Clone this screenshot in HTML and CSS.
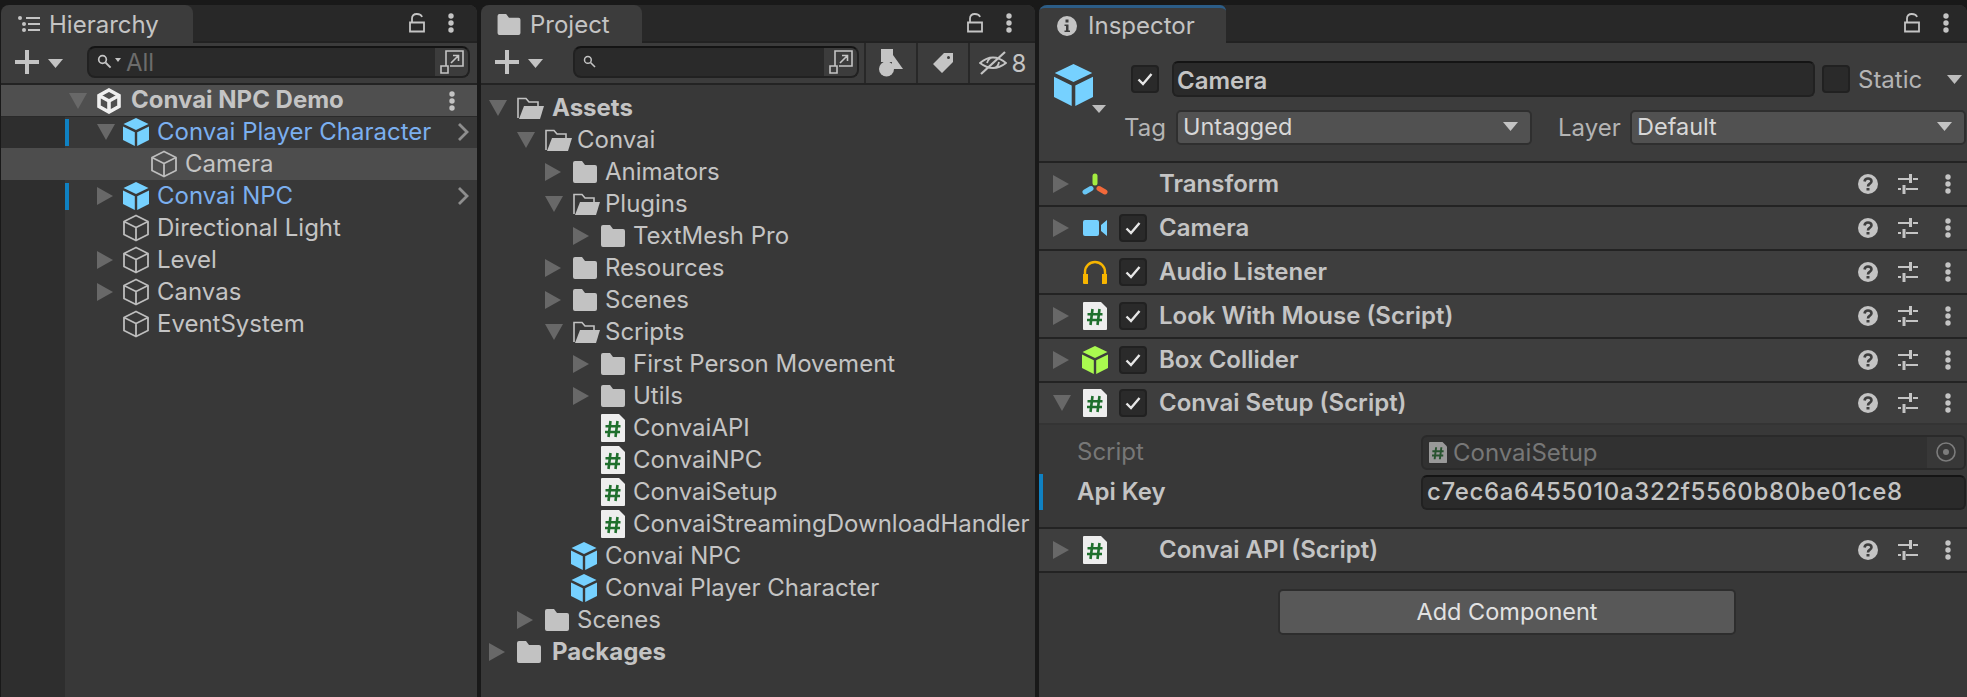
FILE: index.html
```html
<!DOCTYPE html>
<html lang="en">
<head>
    <meta charset="UTF-8">
    <title>Unity Editor</title>
    <link rel="stylesheet" href="styles.css">
</head>
<body>

<svg class="defs" aria-hidden="true">
    <symbol id="tri-r" viewBox="0 0 16 18" preserveAspectRatio="none"><path d="M0 0 16 9 0 18z"/></symbol>
    <symbol id="tri-d" viewBox="0 0 18 16" preserveAspectRatio="none"><path d="M0 0H18L9 16z"/></symbol>
    <symbol id="cube" viewBox="0 0 26 28"><path d="M13 0 25.500 6 13 12 .5 6zM0 8.500 11.800 14.300V28L0 22zM26 8.500 14.200 14.300V28L26 22z"/></symbol>
    <symbol id="cube-line" viewBox="0 0 26 28"><path fill="none" stroke="currentColor" stroke-width="1.800" stroke-linejoin="round" d="M13 1.500 25 7.500V20.500L13 26.500 1 20.500V7.500zM1 7.500 13 13.500 25 7.500M13 13.500V26.500"/></symbol>
    <symbol id="folder" viewBox="0 0 24 22"><path d="M0 2Q0 0 2 0H9L12 4H22Q24 4 24 6V20Q24 22 22 22H2Q0 22 0 20z"/></symbol>
    <symbol id="folder-open" viewBox="0 0 27 22"><path fill="none" stroke="currentColor" stroke-width="1.600" d="M1 21V1.500H9L12 5H21V9"/><path d="M7 9H27L23 22H2z"/></symbol>
    <symbol id="script" viewBox="0 0 24 28"><path fill="#eeeeee" d="M1 0H18L24 6V27Q24 28 23 28H1Q0 28 0 27V1Q0 0 1 0z"/><path fill="none" stroke="#1f6f2d" stroke-width="2.600" d="M9.500 7 7.500 23M16.500 7 14.500 23M4.500 12.200H19.500M4 18H19"/></symbol>
    <symbol id="lock" viewBox="0 0 16 20"><path fill="none" stroke="currentColor" stroke-width="1.800" d="M1 9.500H15V18.500H1zM3 9.500V5.500Q3 1 7.800 1 12 1 13 4"/></symbol>
    <symbol id="dots" viewBox="0 0 6 20"><circle cx="3" cy="3" r="2.700"/><circle cx="3" cy="10" r="2.700"/><circle cx="3" cy="17" r="2.700"/></symbol>
    <symbol id="plus" viewBox="0 0 24 24"><path d="M10 0H14V10H24V14H14V24H10V14H0V10H10z"/></symbol>
    <symbol id="search" viewBox="0 0 20 20"><circle cx="6.500" cy="6.500" r="4.500" fill="none" stroke="currentColor" stroke-width="2"/><path fill="none" stroke="currentColor" stroke-width="2.200" d="M10 10 16 16"/></symbol>
    <symbol id="popout" viewBox="0 0 24 24"><path fill="none" stroke="currentColor" stroke-width="1.600" d="M6 16V1H23V16H10M1 16H8V23H1zM11 13 18 6M13 5.500H18.500V11"/></symbol>
    <symbol id="list" viewBox="0 0 22 16"><circle cx="2" cy="2" r="2"/><circle cx="6" cy="8" r="2"/><circle cx="6" cy="14" r="2"/><path d="M8 1H22V3H8zM10 7H22V9H10zM10 13H22V15H10z"/></symbol>
    <symbol id="shapes" viewBox="0 0 24 28"><path d="M2 0H14V13H2z"/><circle cx="7.500" cy="20" r="7.500"/><path d="M14 6 24 20H12z"/></symbol>
    <symbol id="tag" viewBox="0 0 20 20"><path fill-rule="evenodd" d="M11 0H20V9L9 20 0 11zM15.500 3A1.500 1.500 0 1 0 15.500 6 1.500 1.500 0 0 0 15.500 3z"/></symbol>
    <symbol id="eye" viewBox="0 0 28 24"><path fill="none" stroke="currentColor" stroke-width="1.800" d="M1 12Q14 1 27 12 14 22 1 12zM8 12Q10 6 14 7M20 11Q19 17 14 17"/><path fill="none" stroke="currentColor" stroke-width="2.200" d="M2 23 26 1"/></symbol>
    <symbol id="info" viewBox="0 0 20 20"><path fill-rule="evenodd" d="M10 0A10 10 0 1 0 10 20 10 10 0 0 0 10 0zM8.500 3.500H11.500V6.500H8.500zM7.500 8.500H11.500V14.500H13V16H7.500V14.500H9V10H7.500z"/></symbol>
    <symbol id="help" viewBox="0 0 20 20"><circle cx="10" cy="10" r="10"/><path fill="none" stroke="#3e3e3e" stroke-width="2.600" d="M6.500 7.500Q7 4.500 10 4.500 13.500 4.500 13.500 7.300 13.500 9 11.500 10 10 10.800 10 12.500"/><path fill="#3e3e3e" d="M8.500 14H11.500V16.500H8.500z"/></symbol>
    <symbol id="sliders" viewBox="0 0 20 20"><path d="M0 4H11V6H0zM15 4H20V6H15zM11 0H14V9H11zM0 14H3V16H0zM8 14H20V16H8zM4.500 11H7.500V20H4.500z"/></symbol>
    <symbol id="transform" viewBox="0 0 26 22"><path fill="none" stroke="#a4ec40" stroke-width="5" stroke-linecap="round" d="M13 3V10"/><path fill="none" stroke="#69c6f5" stroke-width="5" stroke-linecap="round" d="M9 15.500 3 19"/><path fill="none" stroke="#f2693a" stroke-width="5" stroke-linecap="round" d="M17 15.500 23 19"/></symbol>
    <symbol id="camera" viewBox="0 0 24 16"><path d="M2 0H14Q16 0 16 2V14Q16 16 14 16H2Q0 16 0 14V2Q0 0 2 0zM18 5 24 0V16L18 11z"/></symbol>
    <symbol id="headphones" viewBox="0 0 24 24"><path fill="none" stroke="currentColor" stroke-width="2.400" d="M2 15V12A10 10 0 0 1 22 12V15"/><path d="M0 14H5V24H1Q0 24 0 23zM19 14H24V23Q24 24 23 24H19z"/></symbol>
    <symbol id="check" viewBox="0 0 16 14"><path fill="none" stroke="#e6e6e6" stroke-width="2.400" d="M1.500 7.500 6 12 14.500 2"/></symbol>
    <symbol id="target" viewBox="0 0 20 20"><circle cx="10" cy="10" r="9" fill="none" stroke="currentColor" stroke-width="1.600"/><circle cx="10" cy="10" r="3"/></symbol>
    <symbol id="chevron" viewBox="0 0 12 18"><path fill="none" stroke="currentColor" stroke-width="2.800" d="M2 1 10 9 2 17"/></symbol>
    <symbol id="unity" viewBox="0 0 24 26"><path fill="none" stroke="currentColor" stroke-width="3.600" d="M12 2 22 7.500V18.500L12 24 2 18.500V7.500zM12 13V24M12 13 2 7.500M12 13 22 7.500"/></symbol>
</svg>

<div class="editor">

    <section class="panel hierarchy">
        <div class="tabbar">
            <div class="tab"><svg class="i-list"><use href="#list"/></svg>Hierarchy</div>
            <div class="tab-tools"><svg class="i-lock"><use href="#lock"/></svg><svg class="i-dots"><use href="#dots"/></svg></div>
        </div>
        <div class="toolbar">
            <svg class="i-plus"><use href="#plus"/></svg>
            <svg class="i-drop"><use href="#tri-d"/></svg>
            <div class="search">
                <svg class="i-search"><use href="#search"/></svg><span class="search-drop"></span>
                <span class="search-text">All</span>
                <span class="popout"><svg class="i-popout"><use href="#popout"/></svg></span>
            </div>
        </div>
        <div class="tree">
            <div class="row scene">
                <svg class="tri-d"><use href="#tri-d"/></svg>
                <svg class="i-unity"><use href="#unity"/></svg>
                <span class="name bold">Convai NPC Demo</span>
                <svg class="i-dots scene-dots"><use href="#dots"/></svg>
            </div>
            <div class="row lv1 changed">
                <span class="arrow"><svg class="tri-d"><use href="#tri-d"/></svg></span>
                <svg class="i-cube"><use href="#cube"/></svg>
                <span class="name blue">Convai Player Character</span>
                <svg class="i-chevron"><use href="#chevron"/></svg>
            </div>
            <div class="row lv2 selected">
                <svg class="i-cube line"><use href="#cube-line"/></svg>
                <span class="name">Camera</span>
            </div>
            <div class="row lv1 changed">
                <span class="arrow"><svg class="tri-r"><use href="#tri-r"/></svg></span>
                <svg class="i-cube"><use href="#cube"/></svg>
                <span class="name blue">Convai NPC</span>
                <svg class="i-chevron"><use href="#chevron"/></svg>
            </div>
            <div class="row lv1">
                <span class="arrow"></span>
                <svg class="i-cube line"><use href="#cube-line"/></svg>
                <span class="name">Directional Light</span>
            </div>
            <div class="row lv1">
                <span class="arrow"><svg class="tri-r"><use href="#tri-r"/></svg></span>
                <svg class="i-cube line"><use href="#cube-line"/></svg>
                <span class="name">Level</span>
            </div>
            <div class="row lv1">
                <span class="arrow"><svg class="tri-r"><use href="#tri-r"/></svg></span>
                <svg class="i-cube line"><use href="#cube-line"/></svg>
                <span class="name">Canvas</span>
            </div>
            <div class="row lv1">
                <span class="arrow"></span>
                <svg class="i-cube line"><use href="#cube-line"/></svg>
                <span class="name">EventSystem</span>
            </div>
        </div>
    </section>

    <section class="panel project">
        <div class="tabbar">
            <div class="tab"><svg class="i-tabfolder"><use href="#folder"/></svg>Project</div>
            <div class="tab-tools"><svg class="i-lock"><use href="#lock"/></svg><svg class="i-dots"><use href="#dots"/></svg></div>
        </div>
        <div class="toolbar">
            <svg class="i-plus"><use href="#plus"/></svg>
            <svg class="i-drop"><use href="#tri-d"/></svg>
            <div class="search">
                <svg class="i-search small"><use href="#search"/></svg>
                <span class="search-text"></span>
                <span class="popout"><svg class="i-popout"><use href="#popout"/></svg></span>
            </div>
            <div class="tool-btns">
                <span class="tool-btn"><svg class="i-shapes"><use href="#shapes"/></svg></span>
                <span class="tool-btn"><svg class="i-tag"><use href="#tag"/></svg></span>
                <span class="tool-btn wide"><svg class="i-eye"><use href="#eye"/></svg>8</span>
            </div>
        </div>
        <div class="files">
            <div class="file lv0"><span class="arrow"><svg class="tri-d"><use href="#tri-d"/></svg></span><svg class="i-folder open"><use href="#folder-open"/></svg><span class="name bold root">Assets</span></div>
            <div class="file lv1"><span class="arrow"><svg class="tri-d"><use href="#tri-d"/></svg></span><svg class="i-folder open"><use href="#folder-open"/></svg><span class="name">Convai</span></div>
            <div class="file lv2"><span class="arrow"><svg class="tri-r"><use href="#tri-r"/></svg></span><svg class="i-folder"><use href="#folder"/></svg><span class="name">Animators</span></div>
            <div class="file lv2"><span class="arrow"><svg class="tri-d"><use href="#tri-d"/></svg></span><svg class="i-folder open"><use href="#folder-open"/></svg><span class="name">Plugins</span></div>
            <div class="file lv3"><span class="arrow"><svg class="tri-r"><use href="#tri-r"/></svg></span><svg class="i-folder"><use href="#folder"/></svg><span class="name">TextMesh Pro</span></div>
            <div class="file lv2"><span class="arrow"><svg class="tri-r"><use href="#tri-r"/></svg></span><svg class="i-folder"><use href="#folder"/></svg><span class="name">Resources</span></div>
            <div class="file lv2"><span class="arrow"><svg class="tri-r"><use href="#tri-r"/></svg></span><svg class="i-folder"><use href="#folder"/></svg><span class="name">Scenes</span></div>
            <div class="file lv2"><span class="arrow"><svg class="tri-d"><use href="#tri-d"/></svg></span><svg class="i-folder open"><use href="#folder-open"/></svg><span class="name">Scripts</span></div>
            <div class="file lv3"><span class="arrow"><svg class="tri-r"><use href="#tri-r"/></svg></span><svg class="i-folder"><use href="#folder"/></svg><span class="name">First Person Movement</span></div>
            <div class="file lv3"><span class="arrow"><svg class="tri-r"><use href="#tri-r"/></svg></span><svg class="i-folder"><use href="#folder"/></svg><span class="name">Utils</span></div>
            <div class="file lv3"><span class="arrow"></span><svg class="i-folder script"><use href="#script"/></svg><span class="name">ConvaiAPI</span></div>
            <div class="file lv3"><span class="arrow"></span><svg class="i-folder script"><use href="#script"/></svg><span class="name">ConvaiNPC</span></div>
            <div class="file lv3"><span class="arrow"></span><svg class="i-folder script"><use href="#script"/></svg><span class="name">ConvaiSetup</span></div>
            <div class="file lv3"><span class="arrow"></span><svg class="i-folder script"><use href="#script"/></svg><span class="name">ConvaiStreamingDownloadHandler</span></div>
            <div class="file lv2"><span class="arrow"></span><svg class="i-folder prefab"><use href="#cube"/></svg><span class="name">Convai NPC</span></div>
            <div class="file lv2"><span class="arrow"></span><svg class="i-folder prefab"><use href="#cube"/></svg><span class="name">Convai Player Character</span></div>
            <div class="file lv1"><span class="arrow"><svg class="tri-r"><use href="#tri-r"/></svg></span><svg class="i-folder"><use href="#folder"/></svg><span class="name">Scenes</span></div>
            <div class="file lv0"><span class="arrow"><svg class="tri-r"><use href="#tri-r"/></svg></span><svg class="i-folder"><use href="#folder"/></svg><span class="name bold root">Packages</span></div>
        </div>
    </section>

    <section class="panel inspector">
        <div class="tabbar">
            <div class="tab active"><svg class="i-info"><use href="#info"/></svg>Inspector</div>
            <div class="tab-tools"><svg class="i-lock"><use href="#lock"/></svg><svg class="i-dots"><use href="#dots"/></svg></div>
        </div>
        <div class="go-head">
            <div class="go-icon">
                <svg class="i-go"><use href="#cube"/></svg>
                <svg class="i-go-drop"><use href="#tri-d"/></svg>
            </div>
            <div class="go-fields">
                <div class="go-line">
                    <span class="check"><svg class="i-check"><use href="#check"/></svg></span>
                    <div class="name-field">Camera</div>
                    <span class="check"></span>
                    <span class="static-label">Static</span>
                    <svg class="i-drop"><use href="#tri-d"/></svg>
                </div>
                <div class="go-line second">
                    <span class="tag-label">Tag</span>
                    <div class="dropdown tag-drop">Untagged<svg class="i-drop"><use href="#tri-d"/></svg></div>
                    <span class="layer-label">Layer</span>
                    <div class="dropdown layer-drop">Default<svg class="i-drop"><use href="#tri-d"/></svg></div>
                </div>
            </div>
        </div>

        <div class="comp">
            <span class="arrow"><svg class="tri-r"><use href="#tri-r"/></svg></span>
            <span class="comp-icon"><svg class="i-transform"><use href="#transform"/></svg></span>
            <span class="no-check"></span>
            <span class="comp-title">Transform</span>
            <div class="comp-tools"><svg class="i-help"><use href="#help"/></svg><svg class="i-sliders"><use href="#sliders"/></svg><svg class="i-dots"><use href="#dots"/></svg></div>
        </div>
        <div class="comp">
            <span class="arrow"><svg class="tri-r"><use href="#tri-r"/></svg></span>
            <span class="comp-icon"><svg class="i-camera"><use href="#camera"/></svg></span>
            <span class="check"><svg class="i-check"><use href="#check"/></svg></span>
            <span class="comp-title">Camera</span>
            <div class="comp-tools"><svg class="i-help"><use href="#help"/></svg><svg class="i-sliders"><use href="#sliders"/></svg><svg class="i-dots"><use href="#dots"/></svg></div>
        </div>
        <div class="comp">
            <span class="arrow"></span>
            <span class="comp-icon"><svg class="i-phones"><use href="#headphones"/></svg></span>
            <span class="check"><svg class="i-check"><use href="#check"/></svg></span>
            <span class="comp-title">Audio Listener</span>
            <div class="comp-tools"><svg class="i-help"><use href="#help"/></svg><svg class="i-sliders"><use href="#sliders"/></svg><svg class="i-dots"><use href="#dots"/></svg></div>
        </div>
        <div class="comp">
            <span class="arrow"><svg class="tri-r"><use href="#tri-r"/></svg></span>
            <span class="comp-icon"><svg class="i-script"><use href="#script"/></svg></span>
            <span class="check"><svg class="i-check"><use href="#check"/></svg></span>
            <span class="comp-title">Look With Mouse (Script)</span>
            <div class="comp-tools"><svg class="i-help"><use href="#help"/></svg><svg class="i-sliders"><use href="#sliders"/></svg><svg class="i-dots"><use href="#dots"/></svg></div>
        </div>
        <div class="comp">
            <span class="arrow"><svg class="tri-r"><use href="#tri-r"/></svg></span>
            <span class="comp-icon"><svg class="i-box"><use href="#cube"/></svg></span>
            <span class="check"><svg class="i-check"><use href="#check"/></svg></span>
            <span class="comp-title">Box Collider</span>
            <div class="comp-tools"><svg class="i-help"><use href="#help"/></svg><svg class="i-sliders"><use href="#sliders"/></svg><svg class="i-dots"><use href="#dots"/></svg></div>
        </div>
        <div class="comp open">
            <span class="arrow"><svg class="tri-d"><use href="#tri-d"/></svg></span>
            <span class="comp-icon"><svg class="i-script"><use href="#script"/></svg></span>
            <span class="check"><svg class="i-check"><use href="#check"/></svg></span>
            <span class="comp-title">Convai Setup (Script)</span>
            <div class="comp-tools"><svg class="i-help"><use href="#help"/></svg><svg class="i-sliders"><use href="#sliders"/></svg><svg class="i-dots"><use href="#dots"/></svg></div>
        </div>
        <div class="comp-body">
            <div class="prop">
                <span class="prop-label dim">Script</span>
                <div class="field objfield">
                    <svg class="i-script small"><use href="#script"/></svg>
                    <span class="dim">ConvaiSetup</span>
                    <span class="picker"><svg class="i-target"><use href="#target"/></svg></span>
                </div>
            </div>
            <div class="prop changed">
                <span class="prop-label bold">Api Key</span>
                <div class="field keyfield">c7ec6a6455010a322f5560b80be01ce8</div>
            </div>
        </div>
        <div class="comp last">
            <span class="arrow"><svg class="tri-r"><use href="#tri-r"/></svg></span>
            <span class="comp-icon"><svg class="i-script"><use href="#script"/></svg></span>
            <span class="no-check"></span>
            <span class="comp-title">Convai API (Script)</span>
            <div class="comp-tools"><svg class="i-help"><use href="#help"/></svg><svg class="i-sliders"><use href="#sliders"/></svg><svg class="i-dots"><use href="#dots"/></svg></div>
        </div>
        <div class="add-wrap"><button type="button" class="add-btn">Add Component</button></div>
    </section>

</div>

</body>
</html>
```

FILE: styles.css
```css
* {
    box-sizing: border-box;
}
html, body {
    height: 100%;
}
body {
    margin: 0;
    background: #191919;
    overflow: hidden;
    font-family: "Inter", "Liberation Sans", sans-serif;
    font-size: 24px;
    color: #c4c4c4;
}
svg {
    display: block;
    flex: none;
    fill: currentColor;
}
.defs {
    display: none;
}

.editor {
    display: flex;
    gap: 4px;
    height: 100%;
    padding: 5px 0 0 1px;
}
.panel {
    display: flex;
    flex-direction: column;
    background: #383838;
    border-radius: 8px 8px 0 0;
    overflow: hidden;
}
.hierarchy {
    width: 476px;
}
.project {
    width: 554px;
}
.inspector {
    width: 928px;
}

/* tab strip */
.tabbar {
    display: flex;
    align-items: stretch;
    height: 38px;
    flex: none;
    background: #282828;
    box-shadow: inset 0 -2px 0 #222222;
}
.tab {
    display: flex;
    align-items: center;
    height: 38px;
    background: #3c3c3c;
    border-radius: 8px 8px 0 0;
}
.hierarchy .tab {
    width: 192px;
    padding-left: 17px;
}
.project .tab {
    width: 161px;
    padding-left: 16px;
}
.tab.active {
    width: 187px;
    padding-left: 18px;
    border-top: 3px solid #2c5d87;
    border-radius: 6px 6px 0 0;
}
.tab-tools {
    display: flex;
    align-items: center;
    margin-left: auto;
    padding-bottom: 2px;
    color: #c4c4c4;
}
.i-list {
    width: 22px;
    height: 16px;
    margin-right: 9px;
}
.i-tabfolder {
    width: 24px;
    height: 21px;
    margin-right: 9px;
}
.i-info {
    width: 20px;
    height: 20px;
    margin-right: 11px;
}
.i-lock {
    width: 16px;
    height: 20px;
}
.i-dots {
    width: 6px;
    height: 20px;
}
.tab-tools .i-dots {
    margin-left: 23px;
    margin-right: 23px;
}
.inspector .tab-tools .i-dots {
    margin-right: 18px;
}

/* toolbar */
.toolbar {
    display: flex;
    align-items: center;
    height: 42px;
    flex: none;
    background: #3c3c3c;
    border-bottom: 2px solid #232323;
    padding-left: 14px;
}
.i-plus {
    width: 24px;
    height: 24px;
}
.toolbar .i-plus {
    margin-bottom: 2px;
}
.i-drop {
    width: 15px;
    height: 9px;
}
.toolbar .i-drop {
    margin-left: 9px;
}
.search {
    display: flex;
    align-items: center;
    height: 32px;
    background: #2a2a2a;
    border: 2px solid #212121;
    border-top-color: #141414;
    border-radius: 8px;
    color: #c4c4c4;
    overflow: hidden;
}
.hierarchy .search {
    width: 383px;
    margin-left: 24px;
    margin-bottom: 2px;
}
.project .search {
    width: 286px;
    margin-left: 30px;
    margin-bottom: 2px;
}
.i-search {
    width: 17px;
    height: 17px;
    margin-left: 8px;
}
.i-search.small {
    width: 15px;
    height: 15px;
}
.search-drop {
    width: 0;
    height: 0;
    margin: 0 0 4px 1px;
    border: 3px solid transparent;
    border-top: 4px solid #c4c4c4;
    border-bottom: 0;
}
.search-text {
    margin-left: 5px;
    color: #6c6c6c;
}
.popout {
    display: flex;
    align-items: center;
    justify-content: center;
    align-self: stretch;
    width: 33px;
    margin-left: auto;
    background: #3c3c3c;
}
.i-popout {
    width: 24px;
    height: 24px;
}
.tool-btns {
    display: flex;
    align-self: stretch;
    margin-left: 5px;
    flex: 1;
}
.tool-btn {
    display: flex;
    align-items: center;
    justify-content: center;
    width: 52px;
    border-left: 2px solid #282828;
}
.tool-btn.wide {
    flex: 1;
    gap: 5px;
}
.i-shapes {
    width: 24px;
    height: 28px;
}
.i-tag {
    width: 20px;
    height: 20px;
}
.i-eye {
    width: 28px;
    height: 24px;
}

/* hierarchy tree */
.tree {
    flex: 1;
    background: linear-gradient(90deg, #2e2e2e 64px, #383838 64px);
}
.row {
    display: flex;
    align-items: center;
    height: 32px;
    position: relative;
}
.row .arrow {
    width: 26px;
}
.scene {
    height: 31px;
    padding-left: 68px;
    background: #4f4f4f;
    box-shadow: 0 1px 0 #2a2a2a;
}
.lv1 {
    padding-left: 96px;
}
.lv2 {
    padding-left: 150px;
}
.row.selected {
    background: #4d4d4d;
}
.changed::before {
    content: "";
    position: absolute;
    left: 64px;
    top: 3px;
    bottom: 2px;
    width: 4px;
    background: #0f81c2;
}
.tri-d {
    width: 18px;
    height: 16px;
    fill: #686868;
}
.tri-r {
    width: 16px;
    height: 18px;
    fill: #686868;
}
.scene .tri-d {
    margin-right: 10px;
}
.i-unity {
    width: 24px;
    height: 26px;
    margin-right: 10px;
    color: #efefef;
}
.i-cube {
    width: 26px;
    height: 28px;
    margin-right: 8px;
    fill: #76d1ff;
}
.i-cube.line {
    color: #bdbdbd;
}
.name {
    margin-bottom: 2px;
    white-space: nowrap;
}
.bold {
    font-weight: 700;
}
.blue {
    color: #7bafef;
}
.i-chevron {
    position: absolute;
    right: 8px;
    width: 12px;
    height: 18px;
    color: #8e8e8e;
}
.scene-dots {
    position: absolute;
    right: 22px;
    color: #c4c4c4;
}

/* project tree */
.files {
    flex: 1;
    padding-top: 7px;
}
.file {
    display: flex;
    align-items: center;
    height: 32px;
}
.file .arrow {
    width: 28px;
    display: flex;
    align-items: center;
}
.file.lv0 {
    padding-left: 8px;
}
.file.lv1 {
    padding-left: 36px;
}
.file.lv2 {
    padding-left: 64px;
}
.file.lv3 {
    padding-left: 92px;
}
.i-folder {
    width: 24px;
    height: 22px;
    margin-right: 8px;
    color: #c2c2c2;
}
.i-folder.open {
    width: 27px;
    margin-right: 5px;
}
.i-folder.script {
    height: 28px;
}
.i-folder.prefab {
    width: 26px;
    height: 28px;
    margin-left: -2px;
    fill: #76d1ff;
}
.name.root {
    margin-left: 3px;
}

/* inspector header */
.go-head {
    display: flex;
    flex: none;
    height: 120px;
    background: #3c3c3c;
    border-bottom: 2px solid #232323;
}
.go-icon {
    width: 85px;
    padding: 21px 0 0 15px;
}
.i-go {
    width: 39px;
    height: 42px;
    fill: #76d1ff;
}
.i-go-drop {
    width: 14px;
    height: 8px;
    margin: -1px 0 0 38px;
    fill: #bdbdbd;
}
.go-fields {
    flex: 1;
    padding-top: 18px;
}
.go-line {
    display: flex;
    align-items: center;
    height: 36px;
    padding-left: 7px;
}
.go-line.second {
    height: 35px;
    margin-top: 13px;
    padding-left: 0;
}
.check {
    display: flex;
    align-items: center;
    justify-content: center;
    width: 28px;
    height: 28px;
    flex: none;
    background: #2a2a2a;
    border: 2px solid #212121;
    border-radius: 4px;
}
.i-check {
    width: 16px;
    height: 14px;
}
.name-field {
    width: 643px;
    height: 36px;
    margin: 0 7px 0 13px;
    padding-left: 3px;
    line-height: 35px;
    font-weight: 600;
    background: #2a2a2a;
    border: 2px solid #212121;
    border-top-color: #141414;
    border-radius: 6px;
}
.static-label {
    margin-left: 8px;
    color: #b4b4b4;
}
.go-line > .i-drop {
    margin-left: auto;
    margin-right: 5px;
    fill: #bdbdbd;
}
.tag-label {
    width: 52px;
    color: #b4b4b4;
}
.layer-label {
    width: 98px;
    padding-left: 26px;
    color: #b4b4b4;
}
.dropdown {
    display: flex;
    align-items: center;
    justify-content: space-between;
    height: 35px;
    padding: 0 12px 2px 5px;
    background: #515151;
    border: 2px solid #2f2f2f;
    border-radius: 5px;
    font-size: 23.500px;
    color: #d8d8d8;
}
.dropdown .i-drop {
    fill: #c4c4c4;
}
.tag-drop {
    width: 356px;
}
.layer-drop {
    width: 336px;
}

/* components */
.comp {
    display: flex;
    align-items: center;
    height: 44px;
    flex: none;
    padding: 0 0 0 14px;
    background: #3e3e3e;
    border-bottom: 2px solid #232323;
}
.comp.open {
    height: 42px;
    border-bottom: 2px solid #343434;
}
.comp .arrow {
    width: 30px;
    display: flex;
    align-items: center;
}
.comp-icon {
    display: flex;
    align-items: center;
    justify-content: center;
    width: 24px;
    margin-right: 12px;
}
.no-check {
    width: 28px;
}
.comp-title {
    margin: 0 0 2px 12px;
    font-weight: 600;
    white-space: nowrap;
}
.comp-tools {
    display: flex;
    align-items: center;
    margin-left: auto;
    padding-right: 16px;
}
.i-help {
    width: 20px;
    height: 20px;
}
.i-sliders {
    width: 20px;
    height: 20px;
    margin-left: 20px;
}
.comp-tools .i-dots {
    margin-left: 27px;
}
.i-transform {
    width: 26px;
    height: 22px;
}
.i-camera {
    width: 24px;
    height: 16px;
    fill: #76d1ff;
}
.i-phones {
    width: 24px;
    height: 24px;
    color: #f7b500;
}
.i-script {
    width: 24px;
    height: 28px;
}
.i-script.small {
    width: 18px;
    height: 21px;
    opacity: 0.55;
    margin: 0 6px 0 6px;
}
.i-box {
    width: 26px;
    height: 28px;
    fill: #a9f94f;
}
.comp-body {
    flex: none;
    padding: 9px 0 17px;
    border-bottom: 2px solid #232323;
}
.prop {
    display: flex;
    align-items: center;
    height: 36px;
    position: relative;
    margin-bottom: 4px;
    padding-left: 38px;
}
.prop:last-child {
    margin-bottom: 0;
}
.prop.changed::before {
    left: 0;
    top: 0;
    bottom: 0;
}
.prop-label {
    width: 344px;
    flex: none;
    margin-bottom: 2px;
}
.prop-label.bold {
    font-weight: 600;
}
.dim {
    color: #777777;
}
.field {
    display: flex;
    align-items: center;
    width: 545px;
    height: 35px;
    border-radius: 6px;
}
.objfield {
    background: #313131;
    border: 2px solid #2a2a2a;
    overflow: hidden;
}
.picker {
    display: flex;
    align-items: center;
    justify-content: center;
    align-self: stretch;
    width: 37px;
    margin-left: auto;
    background: #383838;
    color: #7c7c7c;
}
.i-target {
    width: 20px;
    height: 20px;
}
.keyfield {
    padding: 0 0 2px 4px;
    font-weight: 500;
    letter-spacing: 0.650px;
    background: #2a2a2a;
    border: 2px solid #212121;
    border-top-color: #141414;
}
.add-wrap {
    display: flex;
    justify-content: center;
    padding: 16px 0 0 8px;
}
.add-btn {
    width: 458px;
    height: 46px;
    padding-bottom: 3px;
    font: inherit;
    font-size: 23.500px;
    color: #e2e2e2;
    background: #585858;
    border: 2px solid #2d2d2d;
    border-radius: 5px;
}
```
